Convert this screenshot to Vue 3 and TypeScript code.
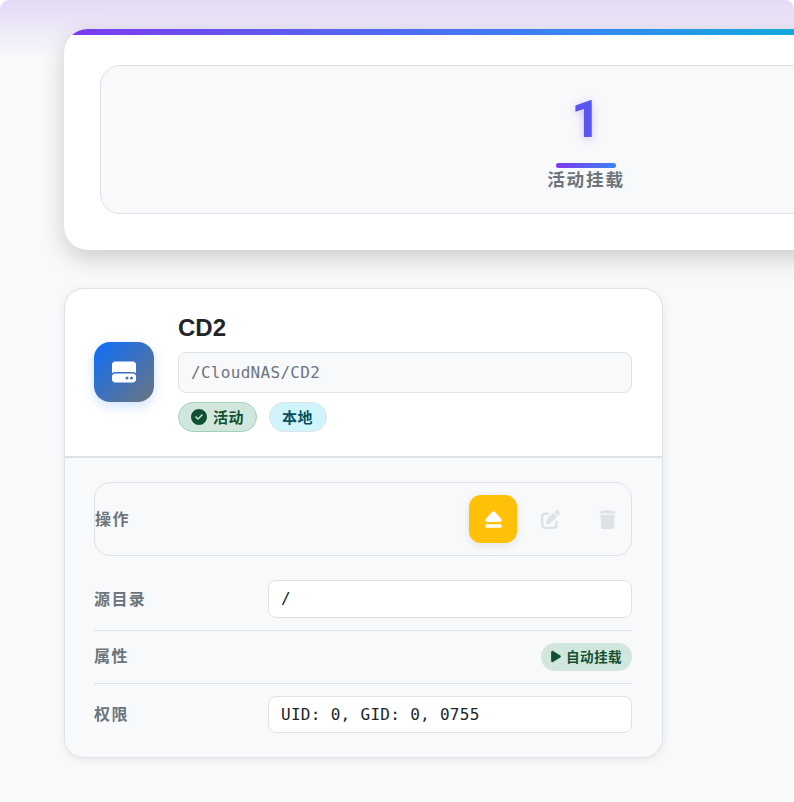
<script setup lang="ts">
const mountName: string = 'CD2'
const mountPath: string = '/CloudNAS/CD2'
const sourceDir: string = '/'
const permission: string = 'UID: 0, GID: 0, 0755'
</script>

<template>
  <div class="page">
    <section class="stats-card">
      <div class="stats-inner">
        <div class="stat">
          <div class="stat-number">1</div>
          <div class="stat-bar"></div>
          <div class="stat-label">活动挂载</div>
        </div>
      </div>
    </section>

    <section class="mount-card">
      <header class="mount-head">
        <div class="drive-icon">
          <svg viewBox="0 0 512 512" width="24" height="24" fill="#fff">
            <path d="M0 96C0 60.7 28.7 32 64 32H448c35.3 0 64 28.7 64 64V280.4c-17-15.2-39.4-24.4-64-24.4H64c-24.6 0-47 9.2-64 24.4V96zM64 288H448c35.3 0 64 28.7 64 64v64c0 35.3-28.7 64-64 64H64c-35.3 0-64-28.7-64-64V352c0-35.3 28.7-64 64-64zM320 416a32 32 0 1 0 0-64 32 32 0 1 0 0 64zm128-32a32 32 0 1 0 -64 0 32 32 0 1 0 64 0z" />
          </svg>
        </div>
        <div class="head-info">
          <h3 class="mount-name">{{ mountName }}</h3>
          <div class="path-box">{{ mountPath }}</div>
          <div class="badges">
            <span class="badge badge-active">
              <svg viewBox="0 0 512 512" width="16" height="16" fill="currentColor">
                <path d="M256 512A256 256 0 1 0 256 0a256 256 0 1 0 0 512zM369 209L241 337c-9.4 9.4-24.6 9.4-33.9 0l-64-64c-9.4-9.4-9.4-24.6 0-33.9s24.6-9.4 33.9 0l47 47L335 175c9.4-9.4 24.6-9.4 33.9 0s9.4 24.6 0 33.9z" />
              </svg>
              <span class="lifted">活动</span>
            </span>
            <span class="badge badge-local"><span class="lifted">本地</span></span>
          </div>
        </div>
      </header>

      <div class="mount-body">
        <div class="actions">
          <span class="field-label">操作</span>
          <div class="action-btns">
            <button class="btn btn-eject" type="button">
              <svg viewBox="0 0 448 512" width="17" height="19" fill="#fff">
                <path d="M224 32c13.5 0 26.3 5.6 35.4 15.6l176 192c12.9 14 16.2 34.3 8.6 51.8S419 320 400 320H48c-19 0-36.3-11.2-43.9-28.7s-4.3-37.7 8.6-51.8l176-192C197.7 37.6 210.5 32 224 32zM0 432c0-26.5 21.5-48 48-48H400c26.5 0 48 21.5 48 48s-21.5 48-48 48H48c-26.5 0-48-21.5-48-48z" />
              </svg>
            </button>
            <button class="btn btn-muted" type="button">
              <svg viewBox="0 0 512 512" width="19" height="19" fill="currentColor">
                <path d="M471.6 21.7c-21.9-21.9-57.3-21.9-79.2 0L362.3 51.7l97.9 97.9 30.1-30.1c21.9-21.9 21.9-57.3 0-79.2L471.6 21.7zm-299.2 220c-6.1 6.1-10.8 13.6-13.5 21.9l-29.6 88.8c-2.9 8.6-.6 18.1 5.8 24.6s15.9 8.7 24.6 5.8l88.8-29.6c8.2-2.7 15.7-7.4 21.9-13.5L437.7 172.3 339.7 74.3 172.4 241.7zM96 64C43 64 0 107 0 160V416c0 53 43 96 96 96H352c53 0 96-43 96-96V320c0-17.7-14.3-32-32-32s-32 14.3-32 32v96c0 17.7-14.3 32-32 32H96c-17.7 0-32-14.3-32-32V160c0-17.7 14.3-32 32-32h96c17.7 0 32-14.3 32-32s-14.3-32-32-32H96z" />
              </svg>
            </button>
            <button class="btn btn-muted" type="button">
              <svg viewBox="0 0 448 512" width="17" height="19" fill="currentColor">
                <path d="M135.2 17.7L128 32H32C14.3 32 0 46.3 0 64S14.3 96 32 96H416c17.7 0 32-14.3 32-32s-14.3-32-32-32H320l-7.2-14.3C307.4 6.8 296.3 0 284.2 0H163.8c-12.1 0-23.2 6.8-28.6 17.7zM416 128H32L53.2 467c1.6 25.3 22.6 45 47.9 45H346.9c25.3 0 46.3-19.7 47.9-45L416 128z" />
              </svg>
            </button>
          </div>
        </div>

        <div class="row row-source">
          <span class="field-label">源目录</span>
          <div class="value-box">{{ sourceDir }}</div>
        </div>
        <div class="row row-attr">
          <span class="field-label field-label-high">属性</span>
          <span class="attr-pill">
            <svg viewBox="0 0 384 512" width="10" height="13" fill="currentColor">
              <path d="M73 39c-14.8-9.1-33.4-9.5-48.6-.9S0 62.6 0 80V432c0 17.4 9.4 33.4 24.4 41.9s33.8 8.1 48.6-.9L361 297c14.3-8.7 23-24.2 23-41s-8.7-32.2-23-41L73 39z" />
            </svg>
            <span>自动挂载</span>
          </span>
        </div>
        <div class="row row-perm">
          <span class="field-label field-label-high">权限</span>
          <div class="value-box value-box-perm">{{ permission }}</div>
        </div>
      </div>
    </section>
  </div>
</template>

<style>
html,
body {
  margin: 0;
  background: #fff;
}
</style>

<style scoped>
.page {
  width: 794px;
  height: 802px;
  box-sizing: border-box;
  overflow: hidden;
  padding: 29px 0 0 64px;
  border-radius: 9px 9px 0 0;
  background: linear-gradient(180deg, #e3d9f6 0, #f8f9fa 58px);
  font-family: "Liberation Sans", "Noto Sans CJK SC", sans-serif;
  color: #212529;
}

.stats-card {
  width: 1044px;
  height: 221px;
  box-sizing: border-box;
  padding: 36px;
  background: #fff;
  border-radius: 24px;
  box-shadow: 0 8px 25px rgba(0, 0, 0, 0.18);
  position: relative;
  overflow: hidden;
}

.stats-card::before {
  content: "";
  position: absolute;
  left: 0;
  right: 0;
  top: 0;
  height: 6px;
  background: linear-gradient(90deg, #7c3aed 0, #3b82f6 489px, #06b6d4 802px);
}

.stats-inner {
  height: 149px;
  box-sizing: border-box;
  border: 1px solid #dee2e6;
  border-radius: 20px;
  background: #f8f9fa;
  display: flex;
  justify-content: center;
}

.stat {
  display: flex;
  flex-direction: column;
  align-items: center;
  padding-top: 21px;
}

.stat-number {
  font-family: Roboto, "Liberation Sans", sans-serif;
  font-size: 51.2px;
  line-height: 66px;
  font-weight: 800;
  color: #5a56f0;
  text-shadow: 0 2px 10px rgba(124, 58, 237, 0.3);
}

.stat-bar {
  width: 60px;
  height: 5px;
  margin-top: 10px;
  border-radius: 3px;
  background: linear-gradient(90deg, #7c3aed, #3b82f6);
}

.stat-label {
  font-size: 17.6px;
  line-height: 25px;
  font-weight: 600;
  color: #6c757d;
  letter-spacing: 1.8px;
}

.mount-card {
  width: 599px;
  margin-top: 38px;
  box-sizing: border-box;
  border: 1px solid #dee2e6;
  border-radius: 20px;
  background: #fff;
  overflow: hidden;
  box-shadow: 0 2px 8px rgba(0, 0, 0, 0.08);
}

.mount-head {
  height: 169px;
  box-sizing: border-box;
  border-bottom: 2px solid #dee2e6;
  padding: 0 30px 0 29px;
  display: flex;
  align-items: center;
  gap: 24px;
}

.drive-icon {
  width: 60px;
  height: 60px;
  flex: none;
  margin-bottom: 2px;
  border-radius: 16px;
  background: linear-gradient(135deg, #0d6efd, #6c757d);
  box-shadow: 0 4px 12px rgba(13, 110, 253, 0.2);
  display: flex;
  align-items: center;
  justify-content: center;
}

.head-info {
  flex: 1;
  min-width: 0;
}

.mount-name {
  margin: 0 0 10px;
  font-size: 24px;
  line-height: 29px;
  font-weight: 700;
}

.path-box {
  height: 41px;
  box-sizing: border-box;
  border: 1px solid #dee2e6;
  border-radius: 8px;
  background: #f8f9fa;
  padding: 0 12px;
  line-height: 39px;
  font-family: "DejaVu Sans Mono", monospace;
  font-size: 16px;
  letter-spacing: 0.3px;
  color: #6c757d;
}

.badges {
  display: flex;
  gap: 12px;
  margin-top: 9px;
}

.badge {
  height: 30px;
  box-sizing: border-box;
  display: inline-flex;
  align-items: center;
  gap: 6px;
  padding: 0 12px;
  border-radius: 15px;
  font-size: 15px;
  letter-spacing: 0.5px;
  font-weight: 600;
}

.lifted {
  margin-bottom: 2px;
}

.badge-active {
  background: #d1e7dd;
  color: #0f5132;
  border: 1px solid #a3cfbb;
}

.badge-local {
  padding-right: 13px;
  background: #cff4fc;
  color: #055160;
  border: 1px solid #dee2e6;
}

.mount-body {
  background: #f8f9fa;
  padding: 24px 30px 24px 29px;
}

.actions {
  height: 74px;
  box-sizing: border-box;
  border: 1px solid #dee2e6;
  border-radius: 16px;
  display: flex;
  align-items: center;
  justify-content: space-between;
}

.action-btns {
  display: flex;
  gap: 9px;
}

.btn {
  width: 48px;
  height: 48px;
  padding: 0;
  border: 0;
  border-radius: 12px;
  background: transparent;
  display: flex;
  align-items: center;
  justify-content: center;
}

.btn-eject {
  background: #ffc107;
  box-shadow: 0 2px 8px rgba(0, 0, 0, 0.1);
}

.btn-muted {
  color: #dee2e6;
}

.field-label {
  padding-bottom: 2px;
  font-size: 16px;
  letter-spacing: 1.4px;
  font-weight: 600;
  color: #6c757d;
}

.field-label-high {
  padding-bottom: 4px;
}

.row {
  display: flex;
  align-items: center;
  justify-content: space-between;
}

.row-source {
  margin-top: 24px;
  padding-bottom: 12px;
  border-bottom: 1px solid #dee2e6;
}

.row-attr {
  padding: 12px 0;
  border-bottom: 1px solid #dee2e6;
}

.row-perm {
  padding-top: 12px;
}

.value-box {
  width: 364px;
  height: 38px;
  box-sizing: border-box;
  border: 1px solid #dee2e6;
  border-radius: 8px;
  background: #fff;
  padding: 0 12px;
  line-height: 36px;
  font-family: "DejaVu Sans Mono", monospace;
  font-size: 16px;
  letter-spacing: 0.3px;
  color: #212529;
}

.value-box-perm {
  height: 37px;
  line-height: 35px;
}

.attr-pill {
  height: 28px;
  box-sizing: border-box;
  display: inline-flex;
  align-items: center;
  gap: 5px;
  padding: 0 10px 2px;
  border-radius: 14px;
  background: #d1e7dd;
  color: #0f5132;
  font-size: 13.6px;
  letter-spacing: 0.4px;
  font-weight: 600;
}
</style>
